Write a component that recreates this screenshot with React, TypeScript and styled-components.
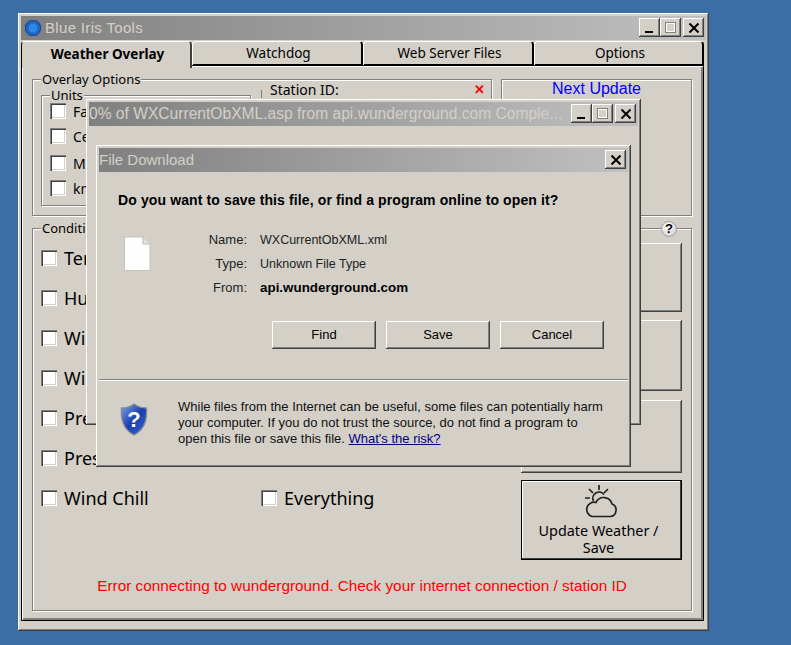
import React from 'react'
import styled, {createGlobalStyle} from 'styled-components'

const FACE = '#d4d0c8'

const GlobalStyle = createGlobalStyle`
  html, body {
    margin: 0;
    height: 100%;
    background: #3a6ea5;
  }
`

const Desktop = styled.div`
  position: relative;
  box-sizing: border-box;
  width: 791px;
  height: 645px;
  padding: 13px 0 0 18px;
  overflow: hidden;
  font-family: 'Noto Sans', sans-serif;
  color: #000;
`

const Frame = styled.div`
  box-sizing: border-box;
  background: ${FACE};
  box-shadow: inset -1px -1px 0 #404040, inset 1px 1px 0 #fff,
    inset -2px -2px 0 #808080;
`

const MainWindow = styled(Frame)`
  display: flex;
  flex-direction: column;
  width: 691px;
  height: 618px;
  padding: 3px 3px 10px 3px;
`

const FloatingWindow = styled(Frame)<{$x: number; $y: number; $w: number; $h: number}>`
  position: absolute;
  left: ${(p) => p.$x}px;
  top: ${(p) => p.$y}px;
  width: ${(p) => p.$w}px;
  height: ${(p) => p.$h}px;
  padding: 3px;
`

const TitleBar = styled.div`
  display: flex;
  align-items: center;
  flex: none;
  height: 23px;
  padding: 0 2px 1px 0;
  background: linear-gradient(to right, #808080, #c0c0c0);
  color: ${FACE};
`

const TitleText = styled.div<{$size?: number; $spacing?: number}>`
  flex: 1;
  font-family: 'Liberation Sans', sans-serif;
  font-size: ${(p) => p.$size ?? 15}px;
  letter-spacing: ${(p) => p.$spacing ?? 0}px;
  white-space: nowrap;
  overflow: hidden;
`

const LogoWrap = styled.svg`
  flex: none;
  width: 20px;
  height: 20px;
  margin: 0 2px 0 2px;
`

const ControlButton = styled.div<{$gap?: number}>`
  display: flex;
  align-items: center;
  justify-content: center;
  flex: none;
  box-sizing: border-box;
  width: 21px;
  height: 19px;
  margin-left: ${(p) => p.$gap ?? 0}px;
  background: ${FACE};
  box-shadow: inset -1px -1px 0 #404040, inset 1px 1px 0 #fff,
    inset -2px -2px 0 #808080;
`

const TabStrip = styled.div`
  display: grid;
  grid-template-columns: 171px 171px 171px 170px;
  flex: none;
  height: 25px;
  margin: 1px 2px -1px 0;
  z-index: 1;
`

const Tab = styled.div<{$active?: boolean}>`
  display: flex;
  align-items: center;
  justify-content: center;
  box-sizing: border-box;
  height: ${(p) => (p.$active ? 27 : 24)}px;
  padding-left: 3px;
  padding-bottom: ${(p) => (p.$active ? 3 : 2)}px;
  background: ${FACE};
  font-size: 13.5px;
  font-weight: ${(p) => (p.$active ? 700 : 400)};
  border-top: 1px solid #fff;
  border-left: 1px solid ${(p) => (p.$active ? '#000' : '#fff')};
  border-right: 2px solid ${(p) => (p.$active ? '#404040' : '#000')};
  border-top-left-radius: 4px;
  border-top-right-radius: 4px;
  box-shadow: ${(p) => (p.$active ? 'none' : 'inset 0 -1px 0 #000')};
`

const Panel = styled.div`
  flex: 1;
  box-sizing: border-box;
  margin-right: 2px;
  padding: 13px 10px 0 10px;
  border: 1px solid #000;
  box-shadow: inset 1px 1px 0 #fff, inset -2px -2px 0 #808080;
`

const TopRow = styled.div`
  display: flex;
  gap: 9px;
`

const Group = styled.div<{$w?: number; $h?: number}>`
  position: relative;
  box-sizing: border-box;
  width: ${(p) => (p.$w ? `${p.$w}px` : 'auto')};
  height: ${(p) => (p.$h ? `${p.$h}px` : 'auto')};
  border: 1px solid #808080;
  box-shadow: inset 1px 1px 0 #fff, 1px 1px 0 #fff;
`

const Legend = styled.span`
  position: absolute;
  top: -9px;
  left: 8px;
  padding: 0 1px;
  background: ${FACE};
  font-size: 13px;
  line-height: 16px;
`

const OverlayOptions = styled(Group)`
  display: flex;
  padding: 15px 0 0 8px;
`

const Units = styled(Group)`
  display: grid;
  grid-template-rows: 25px 27px 25px 25px;
  padding: 7px 0 0 8px;
`

const StationColumn = styled.div`
  position: relative;
  flex: 1;
  margin: -5px 0 0 10px;
  border-left: 1px solid #808080;
  height: 8px;
  font-size: 14px;
`

const StationLabel = styled.span`
  position: absolute;
  top: -8px;
  left: 8px;
  line-height: 16px;
`

const StationError = styled.span`
  position: absolute;
  top: -9px;
  right: 6px;
  color: #f00;
  font-size: 13px;
  font-weight: 700;
  line-height: 16px;
`

const NextUpdate = styled(Group)`
  text-align: center;
  color: #00f;
  font-family: 'Liberation Sans', sans-serif;
  font-size: 16px;
  line-height: 17px;
`

const Conditions = styled(Group)`
  display: flex;
  flex-direction: column;
  margin-top: 12px;
  padding: 9px 0 0 8px;
`

const ConditionBody = styled.div`
  display: flex;
  height: 338px;
`

const ConditionGrid = styled.div`
  display: grid;
  grid-template-columns: 220px 220px;
  grid-auto-rows: 40px;
  width: 440px;
`

const Check = styled.label<{$big?: boolean}>`
  display: flex;
  align-items: center;
  gap: 7px;
  height: ${(p) => (p.$big ? 40 : 16)}px;
  font-size: ${(p) => (p.$big ? 18 : 14)}px;
  white-space: nowrap;
`

const Box = styled.span`
  display: block;
  flex: none;
  width: 16px;
  height: 16px;
  background: #fff;
  box-shadow: inset 1px 1px 0 #808080, inset 2px 2px 0 #404040,
    inset -1px -1px 0 #fff, inset -2px -2px 0 ${FACE};
`

const ButtonStack = styled.div`
  display: flex;
  flex-direction: column;
  margin: 5px 0 0 40px;
`

const SideButton = styled.div<{$h: number; $top?: number; $default?: boolean}>`
  display: flex;
  flex-direction: column;
  align-items: center;
  box-sizing: border-box;
  flex: none;
  width: 161px;
  height: ${(p) => p.$h}px;
  margin-top: ${(p) => p.$top ?? 0}px;
  padding: 5px 6px 0 0;
  text-align: center;
  font-size: 14.4px;
  line-height: 17px;
  box-shadow: ${(p) =>
    p.$default
      ? 'inset 0 0 0 1px #000, inset -2px -2px 0 #404040, inset 2px 2px 0 #fff'
      : 'inset -1px -1px 0 #404040, inset 1px 1px 0 #fff, inset -2px -2px 0 #808080'};
`

const CloudIcon = styled.svg`
  flex: none;
  width: 34px;
  height: 33px;
  margin: 0 0 4px 4px;
`

const HelpBadge = styled.div`
  position: absolute;
  top: -8px;
  right: 14px;
  width: 16px;
  height: 16px;
  border-radius: 50%;
  background: radial-gradient(circle at 40% 35%, #fff, #c8c8c8);
  border: 1px solid #a0a0a0;
  box-sizing: border-box;
  font-family: 'Liberation Sans', sans-serif;
  font-size: 13px;
  font-weight: 700;
  line-height: 14px;
  text-align: center;
`

const ErrorLine = styled.div`
  width: 658px;
  margin-left: -8px;
  text-align: center;
  color: #f00;
  font-family: 'Liberation Sans', sans-serif;
  font-size: 15.35px;
  line-height: 20px;
  white-space: nowrap;
`

const Question = styled.div`
  padding: 20px 0 0 19px;
  height: 39px;
  font-family: 'Liberation Sans', sans-serif;
  font-size: 14px;
  font-weight: 700;
  letter-spacing: 0.12px;
  line-height: 16px;
  white-space: nowrap;
`

const FileInfo = styled.div`
  display: flex;
  height: 91px;
`

const FileIconWrap = styled.svg`
  flex: none;
  width: 28px;
  height: 36px;
  margin: 5px 0 0 24px;
`

const InfoGrid = styled.div`
  display: grid;
  grid-template-columns: 48px auto;
  grid-auto-rows: 24px;
  column-gap: 13px;
  margin-left: 48px;
  align-content: start;
  font-family: 'Liberation Sans', sans-serif;
  font-size: 13px;
  line-height: 18px;
  color: #222;
`

const InfoKey = styled.div`
  text-align: right;
`

const InfoValue = styled.div<{$bold?: boolean}>`
  font-weight: ${(p) => (p.$bold ? 700 : 400)};
  font-size: ${(p) => (p.$bold ? 13.4 : 12.5)}px;
  color: ${(p) => (p.$bold ? '#000' : '#222')};
`

const Actions = styled.div`
  display: flex;
  gap: 10px;
  padding-left: 173px;
  height: 58px;
  margin-top: -1px;
`

const DialogButton = styled.div`
  display: flex;
  align-items: center;
  justify-content: center;
  box-sizing: border-box;
  width: 104px;
  height: 28px;
  padding-bottom: 2px;
  font-family: 'Liberation Sans', sans-serif;
  font-size: 13px;
  box-shadow: inset -1px -1px 0 #404040, inset 1px 1px 0 #fff,
    inset -2px -2px 0 #808080;
`

const Divider = styled.div`
  height: 1px;
  background: #808080;
  border-bottom: 1px solid #fff;
`

const Warning = styled.div`
  display: flex;
  padding-top: 17px;
`

const ShieldWrap = styled.svg`
  flex: none;
  width: 28px;
  height: 33px;
  margin: 5px 0 0 21px;
`

const WarningText = styled.div`
  margin: 0 0 0 30px;
  padding-top: 1px;
  font-family: 'Liberation Sans', sans-serif;
  font-size: 13px;
  line-height: 16px;
  color: #111;
  white-space: nowrap;
`

const RiskLink = styled.a`
  color: #000080;
  text-decoration: underline;
`

function Minimize() {
  return (
    <svg width="12" height="12" viewBox="0 0 12 12">
      <rect x="1" y="9" width="8" height="2" fill="#000" />
    </svg>
  )
}

function Maximize() {
  return (
    <svg width="13" height="13" viewBox="0 0 13 13">
      <rect x="1.5" y="1.5" width="10" height="10" fill="none" stroke="#808080" />
      <rect x="2.5" y="2.5" width="8" height="8" fill="none" stroke="#fff" />
    </svg>
  )
}

function Close() {
  return (
    <svg width="12" height="12" viewBox="0 0 12 12">
      <path d="M1.5 1.5 L10.5 10.5 M10.5 1.5 L1.5 10.5" stroke="#000" strokeWidth="2" />
    </svg>
  )
}

function WindowControls() {
  return (
    <>
      <ControlButton><Minimize /></ControlButton>
      <ControlButton><Maximize /></ControlButton>
      <ControlButton $gap={2}><Close /></ControlButton>
    </>
  )
}

function Logo() {
  return (
    <LogoWrap viewBox="0 0 20 20">
      <circle cx="10" cy="10" r="9" fill="#0a1e40" />
      <circle cx="10" cy="10" r="7.5" fill="#1c66c4" />
      <circle cx="10" cy="10" r="4.5" fill="#2f86e8" />
      <circle cx="10" cy="10" r="8.5" fill="none" stroke="#b8c4d0" strokeWidth="0.7" />
    </LogoWrap>
  )
}

function FileIcon() {
  return (
    <FileIconWrap viewBox="0 0 28 36">
      <path d="M1.5 1 H20 L27 8 V34.5 H1.5 Z" fill="#fefefe" stroke="#c4c2bc" />
      <path d="M20 1 V8 H27" fill="#e4e4e4" stroke="#b8b8b8" />
    </FileIconWrap>
  )
}

function Shield() {
  return (
    <ShieldWrap viewBox="0 0 28 33">
      <defs>
        <linearGradient id="shieldFill" x1="0" y1="0" x2="1" y2="1">
          <stop offset="0" stopColor="#7fa6e8" />
          <stop offset="0.5" stopColor="#1a3fb0" />
          <stop offset="1" stopColor="#3a68d0" />
        </linearGradient>
      </defs>
      <path
        d="M14 1 C18 4 22 5 26.5 5 C27.5 17 24 27 14 32 C4 27 0.5 17 1.5 5 C6 5 10 4 14 1 Z"
        fill="url(#shieldFill)"
        stroke="#8c8c8c"
        strokeWidth="1.3"
      />
      <text
        x="14"
        y="24"
        textAnchor="middle"
        fontFamily="Liberation Sans, sans-serif"
        fontSize="22"
        fontWeight="700"
        fill="#fff"
      >
        ?
      </text>
    </ShieldWrap>
  )
}

function Cloud() {
  return (
    <CloudIcon viewBox="0 0 34 33" fill="none" stroke="#222" strokeWidth="1.7">
      <path d="M15 0 V5 M5 4 L9 8 M24 4 L20 8 M1 13 H6" />
      <path d="M9.5 16 A6.2 6.2 0 0 1 20 9.5" />
      <path d="M8 31.5 H26 A6.5 6.5 0 0 0 28 19 A8.5 8.5 0 0 0 12 17.5 A7 7 0 0 0 8 31.5 Z" />
    </CloudIcon>
  )
}

const UNITS = ['Fahrenheit', 'Celsius', 'MPH', 'knots']

const CONDITIONS = [
  ['Temperature', ''],
  ['Humidity', ''],
  ['Wind Speed', ''],
  ['Wind Direction', ''],
  ['Precipitation', ''],
  ['Pressure', ''],
  ['Wind Chill', 'Everything'],
]

export default function App() {
  return (
    <Desktop>
      <GlobalStyle />
      <MainWindow>
        <TitleBar>
          <Logo />
          <TitleText $spacing={0.33}>Blue Iris Tools</TitleText>
          <WindowControls />
        </TitleBar>
        <TabStrip>
          <Tab $active>Weather Overlay</Tab>
          <Tab>Watchdog</Tab>
          <Tab>Web Server Files</Tab>
          <Tab>Options</Tab>
        </TabStrip>
        <Panel>
          <TopRow>
            <OverlayOptions $w={460} $h={137}>
              <Legend>Overlay Options</Legend>
              <Units $w={210} $h={111}>
                <Legend>Units</Legend>
                {UNITS.map((unit) => (
                  <Check key={unit}>
                    <Box />
                    {unit}
                  </Check>
                ))}
              </Units>
              <StationColumn>
                <StationLabel>Station ID:</StationLabel>
                <StationError>✕</StationError>
              </StationColumn>
            </OverlayOptions>
            <NextUpdate $w={191} $h={137}>Next Update</NextUpdate>
          </TopRow>
          <Conditions $w={660} $h={383}>
            <Legend>Conditions</Legend>
            <HelpBadge>?</HelpBadge>
            <ConditionBody>
              <ConditionGrid>
                {CONDITIONS.flat().map((name, index) =>
                  name ? (
                    <Check $big key={name}>
                      <Box />
                      {name}
                    </Check>
                  ) : (
                    <div key={index} />
                  ),
                )}
              </ConditionGrid>
              <ButtonStack>
                <SideButton $h={69} />
                <SideButton $h={71} $top={8} />
                <SideButton $h={73} $top={9} />
                <SideButton $h={80} $top={7} $default>
                  <Cloud />
                  <span>Update Weather /<br />Save</span>
                </SideButton>
              </ButtonStack>
            </ConditionBody>
            <ErrorLine>
              Error connecting to wunderground. Check your internet connection / station ID
            </ErrorLine>
          </Conditions>
        </Panel>
      </MainWindow>

      <FloatingWindow $x={86} $y={99} $w={555} $h={326}>
        <TitleBar>
          <TitleText $size={15.6}>
            0% of WXCurrentObXML.asp from api.wunderground.com Comple...
          </TitleText>
          <WindowControls />
        </TitleBar>
      </FloatingWindow>

      <FloatingWindow $x={96} $y={145} $w={535} $h={322}>
        <TitleBar>
          <TitleText>File Download</TitleText>
          <ControlButton><Close /></ControlButton>
        </TitleBar>
        <Question>Do you want to save this file, or find a program online to open it?</Question>
        <FileInfo>
          <FileIcon />
          <InfoGrid>
            <InfoKey>Name:</InfoKey>
            <InfoValue>WXCurrentObXML.xml</InfoValue>
            <InfoKey>Type:</InfoKey>
            <InfoValue>Unknown File Type</InfoValue>
            <InfoKey>From:</InfoKey>
            <InfoValue $bold>api.wunderground.com</InfoValue>
          </InfoGrid>
        </FileInfo>
        <Actions>
          <DialogButton>Find</DialogButton>
          <DialogButton>Save</DialogButton>
          <DialogButton>Cancel</DialogButton>
        </Actions>
        <Divider />
        <Warning>
          <Shield />
          <WarningText>
            While files from the Internet can be useful, some files can potentially harm
            <br />
            your computer. If you do not trust the source, do not find a program to
            <br />
            open this file or save this file. <RiskLink>What's the risk?</RiskLink>
          </WarningText>
        </Warning>
      </FloatingWindow>
    </Desktop>
  )
}
